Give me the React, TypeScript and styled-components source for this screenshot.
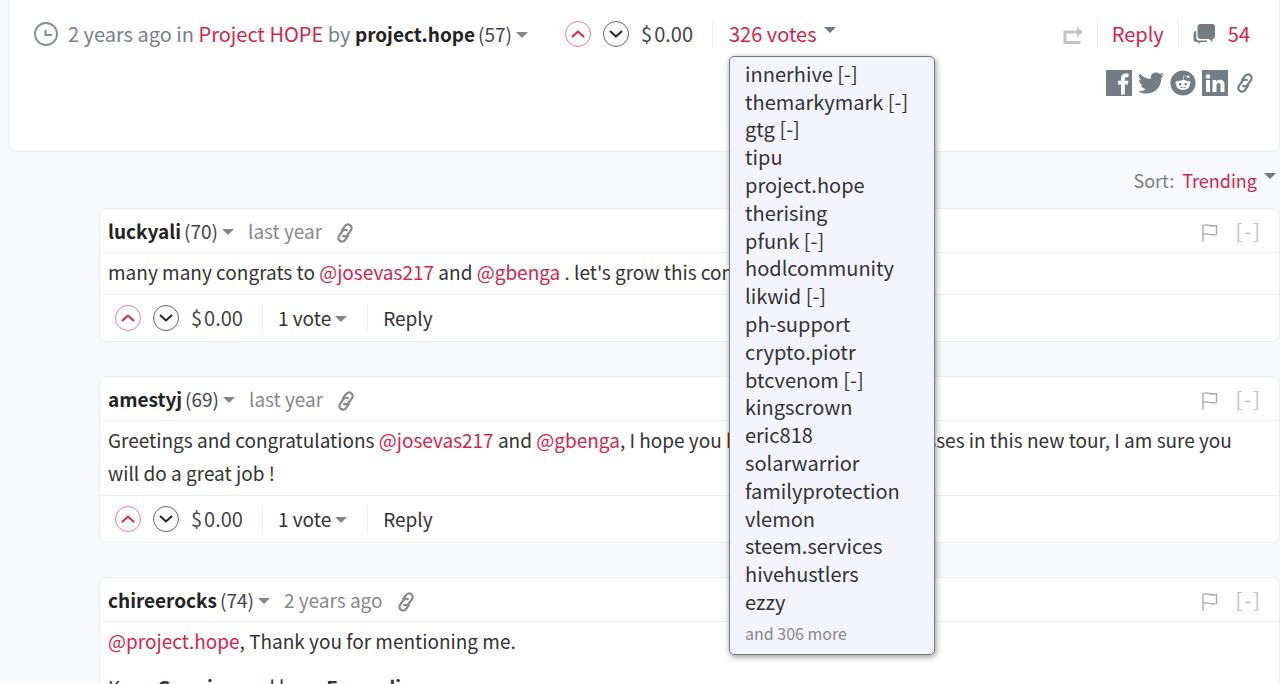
import React from 'react';
import styled, { createGlobalStyle, css } from 'styled-components';
import { FaTwitter, FaReddit } from 'react-icons/fa';

const GlobalStyle = createGlobalStyle`
  *, *::before, *::after { box-sizing: border-box; }
  body {
    margin: 0;
    background: #f8f9fd;
    color: #333;
    font-family: "Noto Sans CJK SC", "Open Sans", sans-serif;
    font-size: 20px;
    line-height: 28px;
  }
  ul { list-style: none; margin: 0; padding: 0; }
  p { margin: 0; }
  a { color: inherit; text-decoration: none; }
  button {
    border: 0; padding: 0; background: none;
    font: inherit; color: inherit; cursor: pointer;
  }
  svg { display: block; flex: none; }
`;

const Page = styled.div`
  min-height: 100vh;
`;

const PostCard = styled.section`
  margin-left: 8px;
  padding: 20px 25px 55px;
  background: #fff;
  border: 1px solid #eceef2;
  border-top: 0;
  border-radius: 0 0 8px 8px;
`;

const Row = styled.div`
  display: flex;
  align-items: center;
`;

const Byline = styled(Row)`
  gap: 10px;
  color: #788187;
  white-space: nowrap;
`;

const Link = styled.a`
  color: #d4254c;
`;

const Author = styled.a`
  color: #222;
  font-size: 19px;
  font-weight: 700;
`;

const Level = styled.span`
  margin-left: 3px;
  color: #444;
  font-size: 19px;
`;

const Caret = styled.span<{ $place?: 'inline' | 'raised' }>`
  display: inline-block;
  border: 6px solid transparent;
  border-top-color: #858585;
  border-bottom: 0;
  vertical-align: middle;
  margin: 2px 0 0 4px;
  ${(p) => p.$place === 'inline' && css`margin: 0 0 4px 4px;`}
  ${(p) => p.$place === 'raised' && css`align-self: flex-start; margin: 7px 0 0 7px; border-top-color: #6f787e;`}
`;

const Voting = styled(Row)<{ $inset?: boolean }>`
  gap: 12px;
  margin: 0 19px 0 ${(p) => (p.$inset ? 15 : 37)}px;
`;

const Round = styled.button<{ $up?: boolean }>`
  display: grid;
  place-items: center;
  width: 26px;
  height: 26px;
  border: 1px solid ${(p) => (p.$up ? '#ee7d9a' : '#666')};
  border-radius: 50%;
  color: ${(p) => (p.$up ? '#d4254c' : '#222')};
`;

const Payout = styled.span`
  color: #444;
  i { font-style: normal; margin-right: 2px; }
`;

const Divider = styled.span`
  width: 1px;
  height: 28px;
  background: #eceef0;
`;

const Votes = styled.div`
  position: relative;
  display: flex;
  margin-left: 16px;
`;

const VotesButton = styled.button`
  display: flex;
  color: #d4254c;
  white-space: nowrap;
`;

const VoterMenu = styled.div`
  position: absolute;
  top: 36px;
  left: 0;
  z-index: 2;
  width: 206px;
  padding: 3px 15px 4px;
  background: #f3f4fd;
  border: 1px solid #777;
  border-radius: 5px;
  box-shadow: 1px 2px 6px rgba(0, 0, 0, 0.4);
`;

const VoterList = styled.ul`
  display: grid;
  grid-template-rows: repeat(20, 1fr);
  align-items: center;
  height: 556px;
  line-height: 26px;
  white-space: nowrap;
`;

const More = styled.div`
  font-size: 16px;
  line-height: 34px;
  color: #888;
`;

const Actions = styled(Row)`
  gap: 14px;
  margin-left: auto;
  padding-right: 4px;
`;

const Replies = styled(Link)`
  display: flex;
  align-items: center;
  gap: 13px;
`;

const Reblog = styled.button`
  padding-top: 4px;
`;

const Social = styled(Row)`
  justify-content: flex-end;
  gap: 6px;
  margin-top: 22px;
  color: #747d83;
  a:last-child { padding-left: 2px; }
`;

const SortRow = styled.div`
  display: flex;
  justify-content: flex-end;
  gap: 8px;
  padding: 14px 4px 14px 0;
  color: #788187;
  font-size: 18px;
`;

const SortButton = styled.button`
  display: flex;
  color: #d4254c;
`;

const Thread = styled.main`
  display: flex;
  flex-direction: column;
  gap: 34px;
  margin-left: 99px;
`;

const Card = styled.article`
  background: #fff;
  border: 1px solid #eceef2;
  border-radius: 8px;
  font-size: 19px;
`;

const CardHead = styled.header`
  display: flex;
  align-items: center;
  height: 44px;
  padding: 0 19px 0 8px;
  border-bottom: 1px solid #eeeff1;
`;

const Age = styled.a`
  margin: 0 14px;
  color: #888;
`;

const Permalink = styled.a`
  color: #888;
  padding-top: 4px;
`;

const HeadTools = styled(Row)`
  gap: 18px;
  margin-left: auto;
  color: #c0c0c0;
`;

const FlagButton = styled.button`
  padding-top: 4px;
`;

const Collapse = styled.button`
  display: flex;
  gap: 2px;
  font-size: 20px;
`;

const Body = styled.div`
  padding: 2px 40px 6px 8px;
  line-height: 33px;
  p + p { margin-top: 13px; }
`;

const CardFoot = styled.footer`
  display: flex;
  align-items: center;
  height: 47px;
  border-top: 1px solid #eeeff1;
  ${Payout} { font-size: 20px; }
`;

const FootItem = styled.div`
  padding: 0 20px 0 15px;
`;

const ClockIcon = () => (
  <svg width="24" height="24" viewBox="0 0 24 24" fill="none" stroke="#858b8f" aria-hidden="true">
    <circle cx="12" cy="12" r="11" strokeWidth="1.8" />
    <path d="M11.500 8v5H18" strokeWidth="2" />
  </svg>
);

const Chevron = ({ up }: { up?: boolean }) => (
  <svg width="14" height="8" viewBox="0 0 14 8" fill="none" stroke="currentColor" strokeWidth="2" aria-hidden="true">
    <path d={up ? 'M1 7l6-5.5L13 7' : 'M1 1l6 5.5L13 1'} />
  </svg>
);

const ReblogIcon = () => (
  <svg width="20" height="18" viewBox="0 0 20 18" fill="none" aria-hidden="true">
    <path d="M17.500 15.500H2V5h12" stroke="#c4c4c4" strokeWidth="3" />
    <path d="M14 0l6 5-6 5z" fill="#c4c4c4" />
  </svg>
);

const ChatIcon = () => (
  <svg width="22" height="22" viewBox="0 0 22 22" fill="#747d83" aria-hidden="true">
    <path d="M7.500 1h11.500a3 3 0 0 1 3 3v9a3 3 0 0 1-2.500 3V19l-3.500-3H7.500a3 3 0 0 1-3-3V4a3 3 0 0 1 3-3z" />
    <path d="M3.200 8v6.500A3 3 0 0 0 6.200 17.500H14v1.500H7.500L5.500 21.500V19H3.500A3 3 0 0 1 .5 16v-5A3 3 0 0 1 3.200 8z" />
  </svg>
);

const FacebookIcon = () => (
  <svg width="26" height="26" viewBox="0 0 26 26" aria-hidden="true">
    <path fill="currentColor" d="M0 0h26v26H0z" />
    <path fill="#fff" d="M15 24.500V14.500h-3v-3.800h3V8.500c0-3.200 1.900-4.900 4.800-4.900 1.200 0 2.100.1 2.700.2v3.400h-1.900c-1.500 0-1.800.7-1.800 1.800v1.700h3.600l-.5 3.800h-3.100v10z" />
  </svg>
);

const LinkedinIcon = () => (
  <svg width="26" height="26" viewBox="0 0 26 26" aria-hidden="true">
    <path fill="currentColor" d="M0 0h26v26H0z" />
    <circle cx="6" cy="6.500" r="2.300" fill="#fff" />
    <path fill="#fff" d="M4 10h4v12H4zM10.500 10h3.800v1.700c.6-1.100 1.900-2 3.800-2 3.400 0 4.400 2.100 4.400 5.200V22h-4v-6.300c0-1.600-.3-2.700-1.900-2.700s-2.100 1.200-2.100 2.700V22h-4z" />
  </svg>
);

const ChainIcon = () => (
  <svg width="18" height="20" viewBox="0 0 18 20" fill="none" stroke="currentColor" strokeWidth="2.200" aria-hidden="true">
    <g transform="rotate(-55 9 10)">
      <path d="M9 14H3.200a3.600 3.600 0 0 1 0-7.200H9.200a3.600 3.600 0 0 1 3.200 4" />
      <path d="M9 6h5.800a3.600 3.600 0 0 1 0 7.200H8.800a3.600 3.600 0 0 1-3.200-4" />
    </g>
  </svg>
);

const FlagIcon = () => (
  <svg width="16" height="18" viewBox="0 0 16 18" fill="none" stroke="#a8a8a8" strokeWidth="1.300" aria-hidden="true">
    <path d="M1 18V1.500c2-1 4-.8 7 0s5 .5 6.500 0v9c-2 .6-4 .8-6.500 0s-5-.8-7 0" />
  </svg>
);

const VoteControls = ({ inset }: { inset?: boolean }) => (
  <Voting $inset={inset}>
    <Round $up aria-label="Upvote"><Chevron up /></Round>
    <Round aria-label="Downvote"><Chevron /></Round>
    <Payout><i>$</i>0.00</Payout>
  </Voting>
);

const voters = [
  'innerhive [-]', 'themarkymark [-]', 'gtg [-]', 'tipu', 'project.hope',
  'therising', 'pfunk [-]', 'hodlcommunity', 'likwid [-]', 'ph-support',
  'crypto.piotr', 'btcvenom [-]', 'kingscrown', 'eric818', 'solarwarrior',
  'familyprotection', 'vlemon', 'steem.services', 'hivehustlers', 'ezzy',
];

type CommentProps = { author: string; level: number; age: string; children: React.ReactNode };

const Comment = ({ author, level, age, children }: CommentProps) => (
  <Card>
    <CardHead>
      <Author href="#author">{author}</Author>
      <Level>({level})</Level>
      <Caret />
      <Age href="#comment">{age}</Age>
      <Permalink href="#comment" aria-label="Permalink"><ChainIcon /></Permalink>
      <HeadTools>
        <FlagButton aria-label="Flag"><FlagIcon /></FlagButton>
        <Collapse aria-label="Collapse"><span>[</span><span>-</span><span>]</span></Collapse>
      </HeadTools>
    </CardHead>
    <Body>{children}</Body>
    <CardFoot>
      <VoteControls inset />
      <Divider />
      <FootItem><button>1 vote<Caret $place="inline" /></button></FootItem>
      <Divider />
      <FootItem><button>Reply</button></FootItem>
    </CardFoot>
  </Card>
);

export default function App() {
  return (
    <Page>
      <GlobalStyle />
      <PostCard>
        <Row>
          <Byline>
            <ClockIcon />
            <span>
              2 years ago in <Link href="#community">Project HOPE</Link> by{' '}
              <Author href="#author">project.hope</Author>
              <Level>(57)</Level>
              <Caret $place="inline" />
            </span>
          </Byline>
          <VoteControls />
          <Divider />
          <Votes>
            <VotesButton aria-expanded="true">326 votes<Caret $place="raised" /></VotesButton>
            <VoterMenu>
              <VoterList>
                {voters.map((v) => <li key={v}><a href="#voter">{v}</a></li>)}
              </VoterList>
              <More>and 306 more</More>
            </VoterMenu>
          </Votes>
          <Actions>
            <Reblog aria-label="Reblog"><ReblogIcon /></Reblog>
            <Divider />
            <Link href="#reply">Reply</Link>
            <Divider />
            <Replies href="#comments"><ChatIcon />54</Replies>
          </Actions>
        </Row>
        <Social>
          <a href="#facebook" aria-label="Facebook"><FacebookIcon /></a>
          <a href="#twitter" aria-label="Twitter"><FaTwitter size={26} /></a>
          <a href="#reddit" aria-label="Reddit"><FaReddit size={26} /></a>
          <a href="#linkedin" aria-label="LinkedIn"><LinkedinIcon /></a>
          <a href="#permalink" aria-label="Permalink"><ChainIcon /></a>
        </Social>
      </PostCard>
      <SortRow>
        <span>Sort:</span>
        <SortButton>Trending<Caret $place="raised" /></SortButton>
      </SortRow>
      <Thread>
        <Comment author="luckyali" level={70} age="last year">
          <p>many many congrats to <Link href="#u">@josevas217</Link> and <Link href="#u">@gbenga</Link> . let's grow this community.</p>
        </Comment>
        <Comment author="amestyj" level={69} age="last year">
          <p>Greetings and congratulations <Link href="#u">@josevas217</Link> and <Link href="#u">@gbenga</Link>, I hope you have many more successes in this new tour, I am sure you will do a great job !</p>
        </Comment>
        <Comment author="chireerocks" level={74} age="2 years ago">
          <p><Link href="#u">@project.hope</Link>, Thank you for mentioning me.</p>
          <p>Keep <b>Growing</b> and keep <b>Expanding</b>.</p>
        </Comment>
      </Thread>
    </Page>
  );
}
